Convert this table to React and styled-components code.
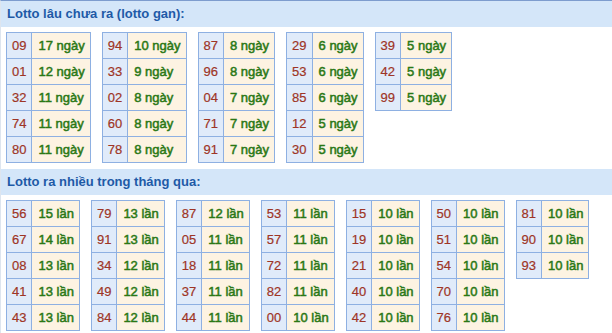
import React from 'react'
import styled, { createGlobalStyle } from 'styled-components'

const gan = [
  [['09', 17], ['01', 12], ['32', 11], ['74', 11], ['80', 11]],
  [['94', 10], ['33', 9], ['02', 8], ['60', 8], ['78', 8]],
  [['87', 8], ['96', 8], ['04', 7], ['71', 7], ['91', 7]],
  [['29', 6], ['53', 6], ['85', 6], ['12', 5], ['30', 5]],
  [['39', 5], ['42', 5], ['99', 5]],
]

const often = [
  [['56', 15], ['67', 14], ['08', 13], ['41', 13], ['43', 13]],
  [['79', 13], ['91', 13], ['34', 12], ['49', 12], ['84', 12]],
  [['87', 12], ['05', 11], ['18', 11], ['37', 11], ['44', 11]],
  [['53', 11], ['57', 11], ['72', 11], ['82', 11], ['00', 10]],
  [['15', 10], ['19', 10], ['21', 10], ['40', 10], ['42', 10]],
  [['50', 10], ['51', 10], ['54', 10], ['70', 10], ['76', 10]],
  [['81', 10], ['90', 10], ['93', 10]],
]

function StatTable({ rows, unit }) {
  return (
    <Table>
      <tbody>
        {rows.map(([num, count]) => (
          <tr key={num}>
            <NumCell>{num}</NumCell>
            <ValueCell>{count} {unit}</ValueCell>
          </tr>
        ))}
      </tbody>
    </Table>
  )
}

function Section({ title, groups, unit, last }) {
  return (
    <>
      <Header>{title}</Header>
      <Tables $last={last}>
        {groups.map((rows, i) => (
          <StatTable key={i} rows={rows} unit={unit} />
        ))}
      </Tables>
    </>
  )
}

function App() {
  return (
    <>
      <GlobalStyle />
      <Box>
        <Section title="Lotto lâu chưa ra (lotto gan):" groups={gan} unit="ngày" />
        <Section title="Lotto ra nhiều trong tháng qua:" groups={often} unit="lần" last />
      </Box>
    </>
  )
}

const GlobalStyle = createGlobalStyle`
  body {
    margin: 0;
    background: #fff;
    font-family: "Liberation Sans", Arial, sans-serif;
  }
`

const Box = styled.div`
  width: 640px;
  border-top: 1px solid #7d9cce;
  border-left: 1px solid #dde5ef;
  border-bottom: 1px solid #dde5ef;
`

const Header = styled.div`
  height: 26px;
  line-height: 26px;
  padding-left: 6px;
  background: #d4e6f9;
  color: #1e5aa7;
  font-size: 13px;
  font-weight: bold;
`

const Tables = styled.div`
  display: flex;
  align-items: flex-start;
  gap: 11px;
  padding: 5px 5px ${(p) => (p.$last ? '2px' : '6px')};
`

const Table = styled.table`
  border-collapse: collapse;
  font-size: 13px;

  td {
    height: 25px;
    border: 1px solid #8eb0e2;
    white-space: nowrap;
  }
`

const NumCell = styled.td`
  padding: 0 5px;
  background: #e0ebfa;
  color: #9e3526;
  -webkit-text-stroke: 0.2px #9e3526;
`

const ValueCell = styled.td`
  padding: 0 5px 0 6px;
  background: #fdf3e2;
  color: #2a7815;
  -webkit-text-stroke: 0.5px #2a7815;
`

export default App
